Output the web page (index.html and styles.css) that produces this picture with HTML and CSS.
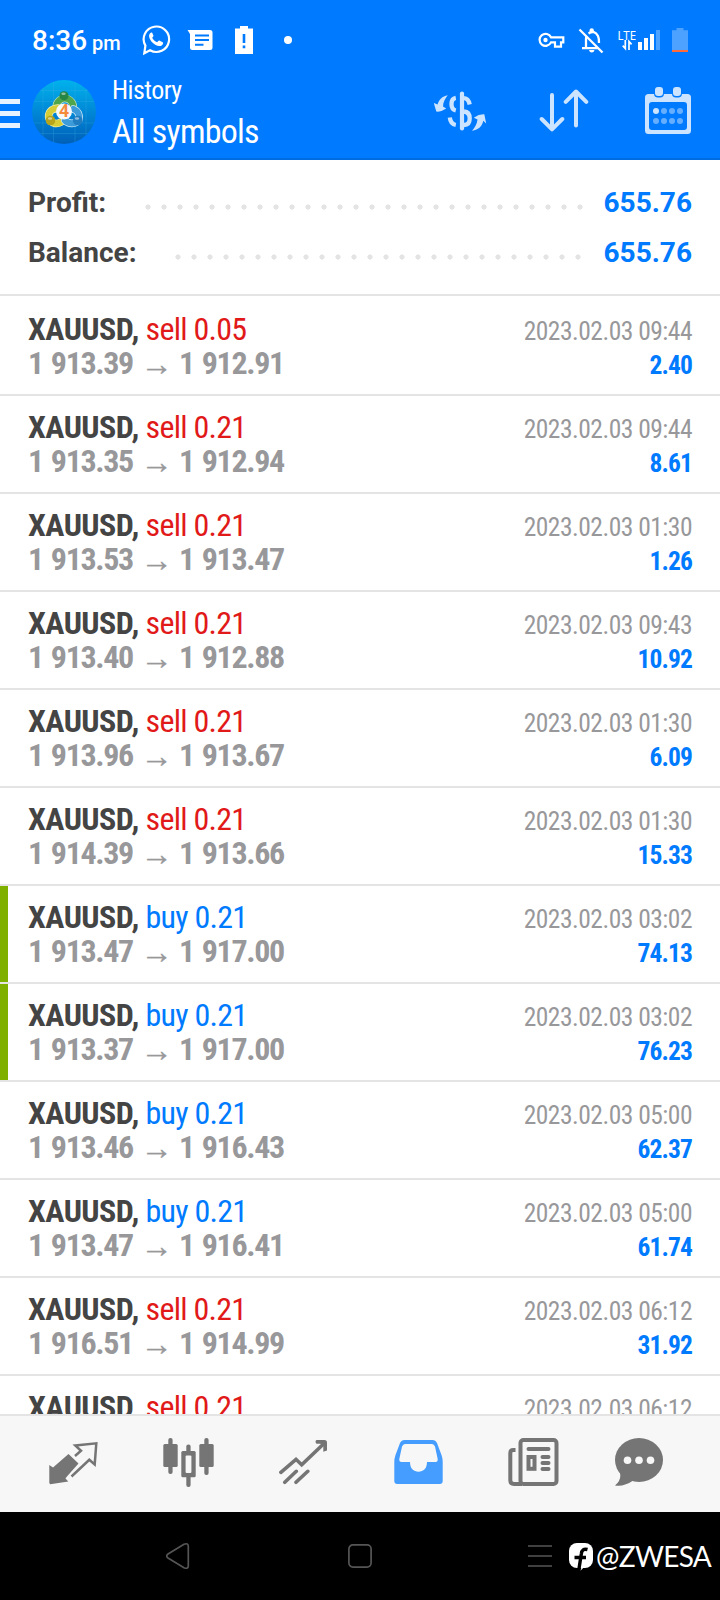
FILE: index.html
```html
<!DOCTYPE html>
<html lang="en">
<head>
<meta charset="utf-8">
<title>History</title>
<link rel="stylesheet" href="styles.css">
</head>
<body>
<header class="top">
  <div class="status">
    <div class="clock">8:36 <small>pm</small></div>
    <div class="status-icons">
      <svg width="30" height="32" viewBox="141 24 30 32"><path d="M144.300 53.200 145.400 45.600A12.700 12.700 0 1 1 150 50.200Z" fill="none" stroke="#fff" stroke-width="2.200"/><path d="M151.400 32.500c-1.600.6-2.500 2.100-2.300 4 .6 4.500 5.600 9.200 10 9.500 1.900.1 3.600-1 4-2.600.1-.8-.2-1.100-.9-1.500l-2.500-1.200c-.7-.3-1.100-.1-1.500.4l-1 1.200c-2.200-.8-4-2.500-5-4.600l1-1.300c.3-.4.3-.7.1-1.200l-1-2.200c-.2-.5-.5-.6-.9-.5Z" fill="#fff"/></svg>
      <svg width="26" height="22" viewBox="187 29 26 22"><path fill="#fff" d="M187.500 30H210q2.500 0 2.500 2.500v15q0 2.500-2.500 2.500h-17.500q-2.500 0-2.500-2.500V34Z"/><path stroke="#007aff" stroke-width="2" d="M195 35.500h14M195 40h14M195 44.800h8.500"/></svg>
      <svg width="18" height="28" viewBox="235 26 18 28"><path fill="#fff" d="M240 26h8v2.500h5V54h-18V28.500h5Z"/><path fill="none" stroke="#007aff" stroke-width="2.600" d="M244 34v9M244 45.500v2.700"/></svg>
      <svg width="8" height="8" viewBox="0 0 8 8"><circle cx="4" cy="4" r="4" fill="#fff"/></svg>
    </div>
    <div class="status-right">
      <svg width="27" height="16" viewBox="538 32 27 16"><path fill="none" stroke="#fff" stroke-width="2.200" d="M551 37.300h12.300v5h-2.300v4.300h-6v-4.200h-4A6 6 0 1 1 551 37.300Z"/><circle cx="545.500" cy="40" r="2.200" fill="#fff"/></svg>
      <svg width="26" height="26" viewBox="578 28 26 26"><path fill="none" stroke="#fff" stroke-width="2.300" d="M579.500 29.500 602.500 52.500M582 48.200h16M586 48v-9q0-2 1-3.500M588.500 33.500q6-4 9.500 2.500 1 2 1 7"/><path d="M589.500 32v-1.500a2.200 2.200 0 0 1 4.400 0V32ZM589 50h5.500q-.5 2.500-2.700 2.500T589 50Z" fill="#fff"/></svg>
      <svg width="43" height="24" viewBox="617 28 43 24"><text x="617.500" y="40" class="lte" textLength="18.500" lengthAdjust="spacingAndGlyphs">LTE</text><path stroke="#fff" stroke-width="1.700" fill="none" d="M625.300 40v8.500l-2.600-2.800M629 50v-8.500l2.600 2.800"/><path fill="#fff" d="M638 42h4v8h-4zM644 38h4v12h-4zM650 34h4v16h-4z"/><path fill="#4da2ff" d="M656 30h4v20h-4z"/></svg>
      <svg width="16" height="24" viewBox="672 28 16 24"><path fill="#4da2ff" d="M676.500 28h7v2.300h4.500V52h-16V30.300h4.500Z"/><path fill="#ff6a3a" d="M672 50h16v2h-16z"/></svg>
    </div>
  </div>
  <div class="appbar">
    <svg class="burger" width="20" height="30" viewBox="0 98 20 30"><path fill="#e6f2ff" d="M0 99h20v5H0zM0 111h20v5H0zM0 123h20v5H0z"/></svg>
    <svg class="logo" width="64" height="64" viewBox="32 80 64 64">
      <defs>
        <linearGradient id="bg" x1="0" y1="0" x2="0" y2="1"><stop offset="0" stop-color="#00b2ec"/><stop offset=".5" stop-color="#0087d6"/><stop offset="1" stop-color="#0060b8"/></linearGradient>
        <clipPath id="disc"><circle cx="64" cy="112" r="32"/></clipPath>
      </defs>
      <g clip-path="url(#disc)"><path fill="url(#bg)" d="M32 80h64v64H32z"/><path stroke="#45b5e8" stroke-opacity=".3" stroke-width=".8" d="M43 80v64M53.500 80v64M75 80v64M86 80v64M32 90.500h64M32 101.500h64M32 123h64M32 133.500h64"/></g>
      <g fill="none" stroke-linecap="round">
        <path d="M56.500 109A8.500 8.500 0 1 1 73 109" stroke="#cfe8bd" stroke-width="7.600"/>
        <path d="M56.500 109A8.500 8.500 0 1 1 73 109" stroke="#4fa64c" stroke-width="6.200"/>
        <path d="M58 108C51 108.500 47.500 113 49 118.500 51.500 124 57 124.500 61 122" stroke="#f3eeb0" stroke-width="7.600"/>
        <path d="M58 108C51 108.500 47.500 113 49 118.500 51.500 124 57 124.500 61 122" stroke="#d6cd37" stroke-width="6.200"/>
        <path d="M73.500 109C78 111 80 115 79 119.500 75.500 125 68.500 124 65 120.500" stroke="#cbe7f8" stroke-width="7.600"/>
        <path d="M73.500 109C78 111 80 115 79 119.500 75.500 125 68.500 124 65 120.500" stroke="#3c9bd8" stroke-width="6.200"/>
      </g>
      <circle cx="64" cy="95.800" r="4.500" fill="#258645"/><circle cx="50.500" cy="120.500" r="4.800" fill="#b5a41c"/><circle cx="77.700" cy="120.500" r="4.800" fill="#217dc2"/>
      <g fill="#fff" opacity=".5"><ellipse cx="63.500" cy="93.700" rx="2.200" ry="1.200"/><ellipse cx="50" cy="118.500" rx="2.200" ry="1.200"/><ellipse cx="77" cy="118.500" rx="2.200" ry="1.200"/></g>
      <circle cx="64" cy="111.500" r="8" fill="#f7f8fa"/>
      <text x="64" y="117.300" class="logo-num" text-anchor="middle">4</text>
    </svg>
    <div class="titles"><div class="t1">History</div><div class="t2">All symbols</div></div>
    <div class="tools">
      <svg width="53" height="42" viewBox="434 90 53 42"><path fill="none" stroke="#cce4ff" stroke-width="4.300" d="M455.800 97.800Q451.500 98.500 451.500 104T455.800 110.500M464 98.200Q468.500 98.500 469.700 104.500M464 111.500Q469.700 112 469.700 118.500T464 125M449.800 117.500Q450.500 124 455.800 125"/><path stroke="#cce4ff" stroke-width="4.200" stroke-linecap="round" d="M462 93.500v35"/><path fill="#cce4ff" d="M447.800 95.200C442 96 439 100 437.500 104.500L433.800 103 436.300 111.500Q441 112.300 446.200 108.600L443 106.500C443 102 445.500 98 447.800 95.200ZM472 130.800C479 130 482 126 483.300 120.800L486.200 123.500 484.300 114.300Q479 114 473.800 117.700L477.500 119.500C477 124 475 127.500 472 130.800Z"/></svg>
      <svg width="50" height="44" viewBox="539 90 50 44"><path fill="none" stroke="#cce4ff" stroke-width="4" stroke-linecap="round" stroke-linejoin="round" d="M552 96v34M541.700 120 552 130.300 562.300 120M576 126.500v-34M565.700 102.800 576 92.500 586.300 102.800"/></svg>
      <svg width="46" height="48" viewBox="645 87 46 48"><path fill="#cce4ff" fill-rule="evenodd" d="M648.500 94h8q2.500 4 5 0h13q2.500 4 5 0h8q3.500 0 3.500 3.500v33q0 3.500-3.500 3.500h-39q-3.500 0-3.500-3.500v-33q0-3.500 3.500-3.500ZM652 102q-3 0-3 3v22q0 3 3 3h32q3 0 3-3v-22q0-3-3-3Z"/><rect x="654" y="86" width="10" height="11.500" rx="4" fill="#007aff"/><rect x="672" y="86" width="10" height="11.500" rx="4" fill="#007aff"/><rect x="655" y="87" width="8" height="9" rx="3" fill="#cce4ff"/><rect x="673" y="87" width="8" height="9" rx="3" fill="#cce4ff"/><g fill="#66afff"><circle cx="664" cy="111" r="3"/><circle cx="672" cy="111" r="3"/><circle cx="680" cy="111" r="3"/><circle cx="656" cy="121" r="3"/><circle cx="664" cy="121" r="3"/><circle cx="672" cy="121" r="3"/><circle cx="680" cy="121" r="3"/></g><circle cx="656" cy="111" r="3" fill="#cce4ff"/></svg>
    </div>
  </div>
</header>
<section class="summary">
  <div class="sum"><b>Profit:</b><i class="dots profit"></i><strong>655.76</strong></div>
  <div class="sum"><b>Balance:</b><i class="dots balance"></i><strong>655.76</strong></div>
</section>
<main class="list">
  <article class="row"><div class="line"><h2>XAUUSD, <span class="sell">sell 0.05</span></h2><time>2023.02.03 09:44</time></div><div class="line"><p>1 913.39<i>→</i>1 912.91</p><b>2.40</b></div></article>
  <article class="row"><div class="line"><h2>XAUUSD, <span class="sell">sell 0.21</span></h2><time>2023.02.03 09:44</time></div><div class="line"><p>1 913.35<i>→</i>1 912.94</p><b>8.61</b></div></article>
  <article class="row"><div class="line"><h2>XAUUSD, <span class="sell">sell 0.21</span></h2><time>2023.02.03 01:30</time></div><div class="line"><p>1 913.53<i>→</i>1 913.47</p><b>1.26</b></div></article>
  <article class="row"><div class="line"><h2>XAUUSD, <span class="sell">sell 0.21</span></h2><time>2023.02.03 09:43</time></div><div class="line"><p>1 913.40<i>→</i>1 912.88</p><b>10.92</b></div></article>
  <article class="row"><div class="line"><h2>XAUUSD, <span class="sell">sell 0.21</span></h2><time>2023.02.03 01:30</time></div><div class="line"><p>1 913.96<i>→</i>1 913.67</p><b>6.09</b></div></article>
  <article class="row"><div class="line"><h2>XAUUSD, <span class="sell">sell 0.21</span></h2><time>2023.02.03 01:30</time></div><div class="line"><p>1 914.39<i>→</i>1 913.66</p><b>15.33</b></div></article>
  <article class="row marked"><div class="line"><h2>XAUUSD, <span class="buy">buy 0.21</span></h2><time>2023.02.03 03:02</time></div><div class="line"><p>1 913.47<i>→</i>1 917.00</p><b>74.13</b></div></article>
  <article class="row marked"><div class="line"><h2>XAUUSD, <span class="buy">buy 0.21</span></h2><time>2023.02.03 03:02</time></div><div class="line"><p>1 913.37<i>→</i>1 917.00</p><b>76.23</b></div></article>
  <article class="row"><div class="line"><h2>XAUUSD, <span class="buy">buy 0.21</span></h2><time>2023.02.03 05:00</time></div><div class="line"><p>1 913.46<i>→</i>1 916.43</p><b>62.37</b></div></article>
  <article class="row"><div class="line"><h2>XAUUSD, <span class="buy">buy 0.21</span></h2><time>2023.02.03 05:00</time></div><div class="line"><p>1 913.47<i>→</i>1 916.41</p><b>61.74</b></div></article>
  <article class="row"><div class="line"><h2>XAUUSD, <span class="sell">sell 0.21</span></h2><time>2023.02.03 06:12</time></div><div class="line"><p>1 916.51<i>→</i>1 914.99</p><b>31.92</b></div></article>
  <article class="row"><div class="line"><h2>XAUUSD, <span class="sell">sell 0.21</span></h2><time>2023.02.03 06:12</time></div></article>
</main>
<nav class="tabs">
  <svg width="50" height="44" viewBox="49 1441 50 44"><path fill="#757575" d="M49.300 1465 53 1467.500 68.500 1454 78.500 1463.500 66.500 1477 65.500 1478.500 68.300 1481.500 50.200 1484.200 49.300 1483Z"/><path fill="none" stroke="#757575" stroke-width="2.500" d="M75 1456 81 1450.800 75.300 1445.400 96.300 1443.300 94.700 1464.500 89.300 1459.800 71.500 1476.500"/></svg>
  <svg width="51" height="50" viewBox="163 1438 51 50"><g fill="#757575"><rect x="163.300" y="1444" width="14.400" height="23" rx="1.500"/><rect x="168.300" y="1438" width="4.300" height="36" rx="2"/><rect x="199.300" y="1444" width="14.400" height="23" rx="1.500"/><rect x="204.300" y="1438" width="4.300" height="37" rx="2"/><rect x="186.300" y="1444.500" width="4.300" height="42.500" rx="2"/><rect x="181.300" y="1451" width="14.400" height="26.300" rx="1.500"/></g><rect x="185.600" y="1455.500" width="5.800" height="17.500" rx="1" fill="#f7f7f7"/></svg>
  <svg width="49" height="46" viewBox="279 1439 49 46"><path fill="none" stroke="#757575" stroke-width="3.600" stroke-linecap="round" d="M280.900 1472.300 296 1459.300 301.700 1464.700 324 1443.500M284.800 1482.300 296.300 1471.300M296 1482.300 307.800 1471.300"/><path fill="#757575" d="M316.500 1440h8q2.500 0 2.500 2.500v8l-3.700 1.200v-6l-3-2h-3.800q-2-2 0-3.700Z"/></svg>
  <svg width="49" height="44" viewBox="394 1440 49 44"><path fill="#449dff" fill-rule="evenodd" d="M404.500 1440H432.500Q435.500 1440 437 1443L441.500 1455Q442.700 1458.500 442.700 1462V1481Q442.700 1484 439.700 1484H397.300Q394.300 1484 394.300 1481V1462Q394.300 1458.500 395.500 1455L400 1443Q401.500 1440 404.500 1440ZM405 1444Q403 1444 402 1446.500L399.300 1459Q399 1462 401.500 1462H410C410 1468.500 413.500 1471.700 418.500 1471.700S427 1468.500 427 1462H435.500Q438 1462 437.700 1459L435 1446.500Q434 1444 432 1444Z"/></svg>
  <svg width="51" height="48" viewBox="508 1438 51 48"><g fill="none" stroke="#757575" stroke-width="4"><rect x="520.500" y="1440" width="36" height="44" rx="3"/><path d="M522 1484h-8q-3.700 0-3.700-3.700V1453q0-3 3-3h2.200"/><path stroke-linecap="round" d="M528.500 1449h20M542.500 1457h6M542.500 1463h6M542.500 1469h6"/><rect x="528.500" y="1457" width="6" height="11.800"/></g></svg>
  <svg width="48" height="48" viewBox="615 1438 48 48"><ellipse cx="639" cy="1460" rx="24" ry="22" fill="#757575"/><path fill="#757575" d="M619 1470Q623 1479 615 1485.500 624 1487 634 1480Z"/><g fill="#f7f7f7"><circle cx="627.500" cy="1460.300" r="3.800"/><circle cx="639" cy="1460.300" r="3.800"/><circle cx="650.500" cy="1460.300" r="3.800"/></g></svg>
</nav>
<footer class="sysnav">
  <svg width="24" height="28" viewBox="166 1542 24 28"><path fill="none" stroke="#555" stroke-width="1.700" stroke-linejoin="round" d="M168 1554 184 1544.300Q188.300 1542.500 188.300 1546.500V1565.500Q188.300 1569.500 184 1567.700L168 1558Q165.500 1556 168 1554Z"/></svg>
  <svg width="24" height="24" viewBox="0 0 24 24"><rect x=".9" y=".9" width="22.200" height="22.200" rx="4" fill="none" stroke="#555" stroke-width="1.700"/></svg>
  <svg width="24" height="22" viewBox="0 0 24 22"><path stroke="#555" stroke-width="1.700" d="M0 1h24M0 11h24M0 21h24"/></svg>
  <div class="mark"><svg width="25" height="29" viewBox="569 1543 25 29"><rect x="569" y="1544" width="24" height="25" rx="8" fill="#fff"/><path fill="none" stroke="#000" stroke-width="3.400" d="M587.500 1550.500Q582 1549 581.300 1555L578.800 1571M574.500 1558.500h11.500"/><path fill="#fff" d="M580.500 1571.800 581.800 1567 585 1567Z"/></svg><span>@ZWESA</span></div>
</footer>
</body>
</html>
```
FILE: styles.css
```css
* { box-sizing: border-box; }
body { margin: 0; width: 720px; height: 1600px; display: flex; flex-direction: column; overflow: hidden; background: #fff; font-family: Roboto, sans-serif; }
svg { display: block; flex: none; }
h2, p { margin: 0; }

.top { height: 160px; flex: none; background: #007aff; color: #fff; border-bottom: 2px solid #006ce2; }
.status { height: 80px; display: flex; align-items: center; padding: 0 32px; }
.clock { width: 109px; font-size: 28px; font-weight: 500; line-height: 32px; white-space: nowrap; padding-top: 4px; }
.clock small { font-size: 20px; margin-left: -2px; }
.status-icons { display: flex; align-items: center; }
.status-icons svg:nth-child(2) { margin-left: 16px; }
.status-icons svg:nth-child(3) { margin-left: 22px; }
.status-icons svg:nth-child(4) { margin-left: 31px; }
.status-right { margin-left: auto; display: flex; align-items: center; }
.status-right svg:nth-child(2) { margin: 2px 0 0 13px; }
.status-right svg:nth-child(3) { margin-left: 13px; }
.status-right svg:nth-child(4) { margin-left: 12px; }
.lte { font: 12px "Noto Sans", sans-serif; fill: #fff; }

.appbar { height: 78px; display: flex; align-items: flex-start; }
.burger { margin-top: 18px; }
.logo { margin-left: 12px; }
.logo-num { font: bold 17px "Noto Sans", sans-serif; fill: #f58a3c; }
.titles { margin: -5px 0 0 16px; width: 200px; font-family: "Roboto Condensed", sans-serif; white-space: nowrap; }
.t1 { font-size: 26px; line-height: 30px; letter-spacing: -.55px; }
.t2 { font-size: 34px; line-height: 40px; letter-spacing: -.8px; margin-top: 6px; }
.tools { display: flex; align-items: center; padding-top: 7px; margin-left: 122px; }
.tools svg:nth-child(2) { margin-left: 52px; }
.tools svg:nth-child(3) { margin-left: 56px; }

.summary { height: 136px; flex: none; padding: 18px 28px 0; border-bottom: 2px solid #e4e4e4; font-size: 28px; }
.sum { display: flex; height: 50px; line-height: 50px; color: #444; }
.sum b { font-weight: 700; }
.sum strong { color: #007aff; }
.dots { margin-left: auto; height: 6px; margin-top: 26px; background: radial-gradient(circle at 3px 3px, #e4e4e4 2.3px, transparent 2.900px) 0 0 / 16px 6px repeat-x; }
.profit { width: 438px; margin-right: 21px; }
.balance { width: 406px; margin-right: 23px; }

.list { flex: 1; min-height: 0; overflow: hidden; font-family: "Roboto Condensed", sans-serif; }
.row { height: 98px; padding: 14px 28px 0; border-bottom: 2px solid #e4e4e4; white-space: nowrap; }
.row:first-child { height: 100px; padding-top: 16px; }
.marked { background: linear-gradient(#7fb000, #7fb000) left / 8px 100% no-repeat; }
.line { display: flex; justify-content: space-between; align-items: baseline; height: 34px; line-height: 34px; }
.line h2 { font-size: 32px; color: #444; letter-spacing: -.55px; }
.line span { font-weight: 400; letter-spacing: -.75px; }
.sell { color: #e11919; }
.buy { color: #007aff; }
.line time { font-size: 25.500px; color: #98989b; letter-spacing: -.5px; }
.line p { font-size: 32px; font-weight: 700; color: #98989b; letter-spacing: -1.35px; word-spacing: 2px; }
.line p i { display: inline-block; width: 46px; padding-left: 1px; text-align: center; vertical-align: -1px; font: 32px/20px "Liberation Sans", sans-serif; letter-spacing: 0; -webkit-text-stroke: .4px #98989b; }
.line b { font-size: 25.500px; color: #007aff; letter-spacing: -.9px; }

.tabs { height: 98px; flex: none; display: flex; align-items: center; padding: 0 0 4px 49px; background: #f7f7f7; border-top: 2px solid #e4e4e4; }
.tabs svg:nth-child(1) { margin-top: 2px; }
.tabs svg:nth-child(2) { margin: 2px 0 0 64px; }
.tabs svg:nth-child(3) { margin-left: 65px; }
.tabs svg:nth-child(4) { margin-left: 66px; }
.tabs svg:nth-child(5) { margin-left: 65px; }
.tabs svg:nth-child(6) { margin-left: 56px; }
.sysnav { height: 88px; flex: none; display: flex; align-items: center; background: #000; padding: 0 8px 0 166px; }
.sysnav > svg:nth-child(2) { margin-left: 158px; }
.sysnav > svg:nth-child(3) { margin-left: 156px; }
.mark { display: flex; align-items: center; margin-left: 17px; color: #fff; font: 28px/32px Lato, sans-serif; white-space: nowrap; }
.mark span { margin-left: 2px; letter-spacing: -.7px; }
```
